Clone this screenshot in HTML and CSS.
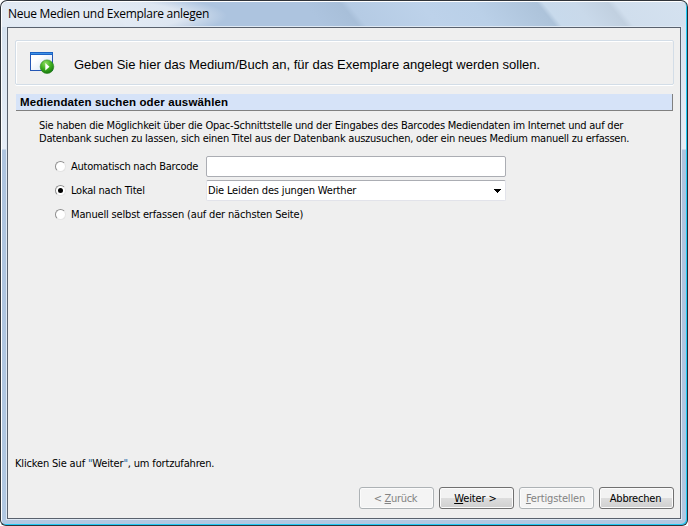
FILE: index.html
```
<!DOCTYPE html>
<html lang="de"><head><meta charset="utf-8"><title>Neue Medien und Exemplare anlegen</title>
<link rel="stylesheet" href="styles.css"></head>
<body>
<main class="window">
  <header class="titlebar"><span class="t title">Neue Medien und Exemplare anlegen</span></header>
  <div class="dialog">
    <section class="banner">
      <svg class="icon" width="26" height="24" viewBox="0 0 26 24">
        <defs><linearGradient id="w" x2="1" y2="1"><stop offset=".3" stop-color="#fff"/><stop offset="1" stop-color="#cfe0f5"/></linearGradient>
        <radialGradient id="g" cx=".4" cy=".25" r=".8"><stop stop-color="#8fdc62"/><stop offset=".5" stop-color="#3fb01f"/><stop offset="1" stop-color="#12700c"/></radialGradient></defs>
        <rect x=".5" y="1.5" width="22" height="18" fill="url(#w)" stroke="#2456b4"/>
        <path d="M0 1h23v3H0z" fill="#1c62c4"/><path d="M1 2h21v1H1z" fill="#3e93e6"/>
        <circle cx="17" cy="15.7" r="6.8" fill="url(#g)" stroke="#26821b" stroke-width=".6"/>
        <path d="M15.3 12l4.2 3.8-4.2 3.8z" fill="#fff"/>
      </svg>
      <span class="t lead">Geben Sie hier das Medium/Buch an, für das Exemplare angelegt werden sollen.</span>
    </section>
    <h2 class="section"><span class="t sectiontext">Mediendaten suchen oder auswählen</span></h2>
    <p class="intro"><span class="t line1">Sie haben die Möglichkeit über die Opac-Schnittstelle und der Eingabes des Barcodes Mediendaten im Internet und auf der</span><br><span class="t line2">Datenbank suchen zu lassen, sich einen Titel aus der Datenbank auszusuchen, oder ein neues Medium manuell zu erfassen.</span></p>
    <div class="options">
      <label class="choice"><i class="radio"></i><span class="t auto">Automatisch nach Barcode</span></label><div class="field"></div>
      <label class="choice"><i class="radio on"></i><span class="t local">Lokal nach Titel</span></label>
      <div class="field select"><span class="t value">Die Leiden des jungen Werther</span><svg class="arrow" width="7" height="4" shape-rendering="crispEdges"><path d="M0 0h7v1H6v1H5v1H4v1H3V3H2V2H1V1H0z"/></svg></div>
      <label class="choice wide"><i class="radio"></i><span class="t manual">Manuell selbst erfassen (auf der nächsten Seite)</span></label>
    </div>
    <p class="hint"><span class="t hinttext">Klicken Sie auf <span class="quote">"</span>Weiter<span class="quote">"</span>, um fortzufahren.</span></p>
    <footer class="buttons">
      <button class="btn off back"><span class="t">&lt; <u>Z</u>urück</span></button>
      <button class="btn next"><span class="t"><u>W</u>eiter &gt;</span></button>
      <button class="btn off finish"><span class="t"><u>F</u>ertigstellen</span></button>
      <button class="btn cancel"><span class="t">Abbrechen</span></button>
    </footer>
  </div>
</main>
</body></html>
```
FILE: styles.css
```
* { box-sizing: border-box; }
body { margin: 0; width: 688px; height: 526px; overflow: hidden; background: #fff; font: 11px/13px "DejaVu Sans Condensed", "DejaVu Sans", sans-serif; font-stretch: condensed; color: #000; }
.t { white-space: nowrap; }
.window { width: 688px; height: 526px; padding: 0 6px 6px; display: flex; flex-direction: column; border: 1px solid #30343a; border-right-color: #222f35; border-radius: 7px 7px 6px 6px;
  background: linear-gradient(180deg, #d3e0ee 0, #e6edf6 148px, #aec4df 149px, #b1c8e2 100%); box-shadow: inset 1px 1px #fff, inset -1px -1px #20c9f5; }
.titlebar { height: 25px; margin: 1px -4px 0 -5px; padding: 4px 0 0 6px; border-radius: 5px 5px 0 0; background: radial-gradient(ellipse 150px 24px at 75px 14px, rgba(238,243,249,.85) 0, rgba(235,241,248,.75) 70%, rgba(235,241,248,0) 100%), linear-gradient(51deg, #c7d5e5 0, #b6c7dc 95px, #bccde2 97px, #b0c3dc 148px, #adc4df 152px, #adc4df 250px, #a8bfd9 278px, #b5cbe4 284px, #bdd2ea 340px, #bad0e8 380px, #adc3da 431px, #c8daec 436px, #c9d9ea 460px, #c1d0e0 486px, #d0deed 492px, #d4e1ef 540px); }
.title { font: 12px/16px "Open Sans", sans-serif; letter-spacing: -.28px; }
.dialog { flex: 1; display: flex; flex-direction: column; background: #efefef; border: 1px solid #59616d; box-shadow: 0 0 0 1px #dfe9f4; padding: 12px 6px 9px 7px; }
.banner { height: 45px; border: 1px solid #d3dde7; border-radius: 2px; box-shadow: inset 1px 1px #fff, 0 1px #fff; display: flex; align-items: center; padding-left: 14px; }
.lead { margin: 4px 0 0 18px; font: 13px/16px "Liberation Sans", sans-serif; }
.section { margin: 9px 0 0 1px; width: 657px; height: 17px; background: #d6e3f8; border: solid #808080; border-width: 0 1px 1px 0; font: bold 11.5px/16px "Liberation Sans", sans-serif; letter-spacing: .13px; padding-left: 4px; }
.intro { margin: 8px 0 0 24px; }
.line1 { letter-spacing: -.22px; }
.line2 { letter-spacing: -.23px; }
.options { margin: 11px 0 0 40px; display: grid; grid-template-columns: 151px 300px; grid-auto-rows: 21px; row-gap: 3px; }
.choice { display: flex; align-items: center; gap: 5px; padding-bottom: 1px; }
.auto { letter-spacing: -.25px; }
.local { letter-spacing: -.22px; }
.manual, .value, .hint { letter-spacing: -.16px; }
.wide { grid-column: span 2; }
.radio { flex: none; width: 11px; height: 11px; border-radius: 50%; background: #fff; border: 1px solid #8e8e8e; border-right-color: #e4e4e4; border-bottom-color: #e4e4e4; display: grid; place-items: center; }
.on::after { content: ""; width: 5px; height: 5px; border-radius: 50%; background: #000; }
.field { background: #fff; border: 1px solid #abadb3; border-radius: 2px; }
.select { display: flex; align-items: center; justify-content: space-between; padding: 0 4px 1px 1px; border-color: #abadb3 #e2e3ea #e2e3ea; }
.arrow { margin-top: 2px; }
.hint { margin: auto 0 17px; }
.quote { color: #1769a8; }
.buttons { display: flex; justify-content: flex-end; gap: 5px; }
.btn { width: 75px; height: 22px; padding: 0; border: 1px solid #707070; border-radius: 3px; background: linear-gradient(#f2f2f2 0 48%, #dddddd 52%, #cfcfcf); box-shadow: inset 0 0 0 1px #fbfbfb; font: inherit; color: #000; }
.btn .t { margin-right: 2px; }
.off { background: #f4f4f4; border-color: #adb2b5; color: #838383; }
.back { letter-spacing: -.3px; }
.next { letter-spacing: -.1px; }
.finish { letter-spacing: -.15px; }
.cancel { letter-spacing: -.2px; }
```
